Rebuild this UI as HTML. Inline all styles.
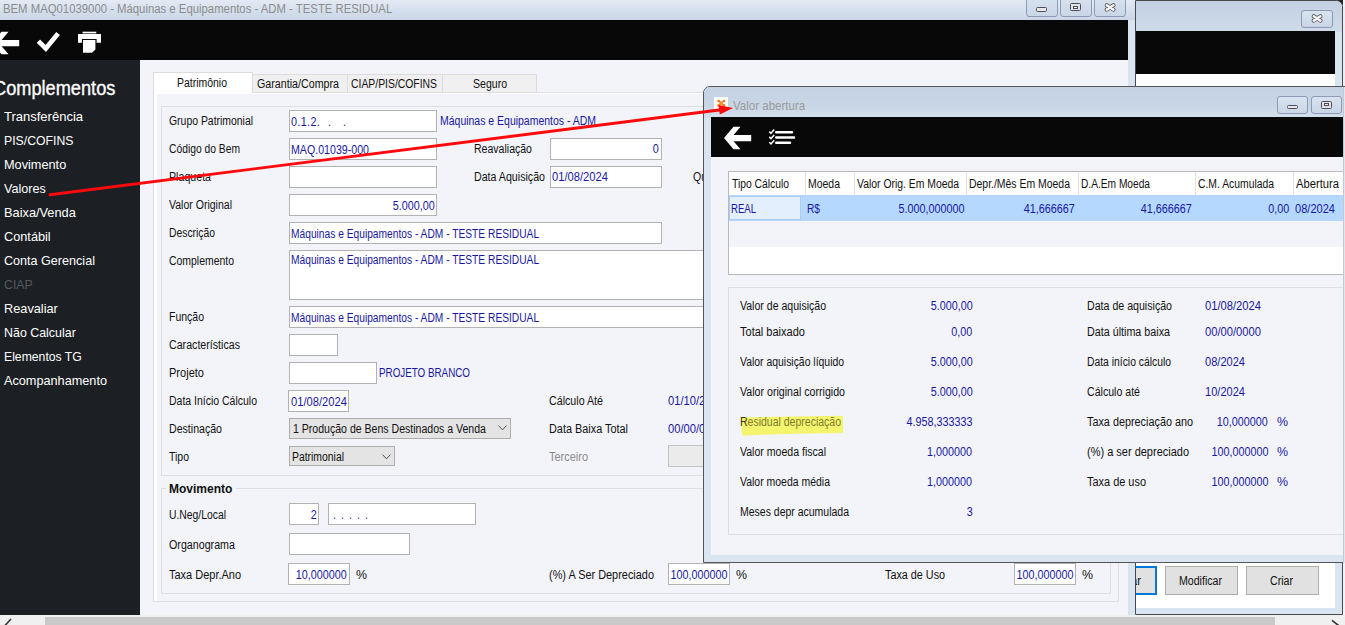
<!DOCTYPE html>
<html lang="pt-BR">
<head>
<meta charset="utf-8">
<title>BEM MAQ01039000 - Máquinas e Equipamentos - ADM - TESTE RESIDUAL</title>
<style>
html,body{margin:0;padding:0;}
body{width:1345px;height:625px;overflow:hidden;position:relative;background:#f3f4f9;font-family:"Liberation Sans",sans-serif;font-size:12px;color:#111;}
.a{position:absolute;}
.t{position:absolute;white-space:nowrap;transform-origin:0 0;transform:scaleX(.865);line-height:14px;font-size:12px;color:#101010;}
.r{position:absolute;white-space:nowrap;transform-origin:100% 0;transform:scaleX(.865);line-height:14px;font-size:12px;text-align:right;color:#101010;}
.b{color:#1717a0;}
.g{color:#8b8b8b;}
.in{position:absolute;background:#fff;border:1px solid #b2b2b2;box-sizing:border-box;}
.side{position:absolute;left:4px;color:#fff;font-size:12.7px;line-height:16px;white-space:nowrap;}
.gb{position:absolute;border:1px solid #dddee3;box-sizing:border-box;}
.wbtn{position:absolute;box-sizing:border-box;border:1px solid #8d99b6;border-radius:3px;background:linear-gradient(#d9e3ef,#c9d6e6);}
.btn{position:absolute;box-sizing:border-box;border:1px solid #adadad;background:#e1e1e1;}
.vl{position:absolute;width:1px;background:#e3e3e3;}
</style>
</head>
<body>

<div id="main" class="a" style="left:0;top:0;width:1135px;height:625px;overflow:hidden;background:#d9e4f1;">
<div class="a" style="left:0;top:0;width:1135px;height:20px;background:linear-gradient(#e3eaf4,#c9d6e6);"></div>
<div class="a" style="left:2.5px;top:1.5px;font-size:12.3px;line-height:15px;color:#8c8c8c;white-space:nowrap;transform-origin:0 0;transform:scaleX(.922);">BEM MAQ01039000 - Máquinas e Equipamentos - ADM - TESTE RESIDUAL</div>
<div class="wbtn" style="left:1026px;top:-4px;width:32px;height:21px;"><div class="a" style="left:9px;top:10px;width:9px;height:2.6px;border:1.1px solid #4e4e5a;background:#e6e6e6;border-radius:1.5px;"></div></div>
<div class="wbtn" style="left:1060px;top:-4px;width:32px;height:21px;"><div class="a" style="left:9px;top:6px;width:8.6px;height:6.3px;border:1.2px solid #4e4e5a;background:#e2e2e2;border-radius:1.5px;"><div class="a" style="left:1.6px;top:1.7px;width:3.4px;height:1px;border:1px solid #4e4e5a;background:#f4f4f4;"></div></div></div>
<div class="wbtn" style="left:1094px;top:-4px;width:32px;height:21px;"><svg class="a" style="left:8.5px;top:6px" width="13" height="11" viewBox="0 0 13 11"><path d="M2.8 2.3 L9.4 6.6 M9.4 2.3 L2.8 6.6" stroke="#5c5c66" stroke-width="4.2" stroke-linecap="round"/><path d="M2.8 2.3 L9.4 6.6 M9.4 2.3 L2.8 6.6" stroke="#f6f6f6" stroke-width="2.5" stroke-linecap="round"/></svg></div>
<div class="a" style="left:0;top:20px;width:1128px;height:40px;background:#080808;"></div>
<svg class="a" style="left:0;top:20px" width="110" height="40" viewBox="0 20 110 40"><g fill="#fff"><path d="M-8 43 L1.5 31.8 H8.5 L1.6 39.9 H19.2 V46.2 H1.6 L8.5 54.2 H1.5 Z"/><path d="M38.4 41.2 L45.8 48.5 L58.1 33.4" fill="none" stroke="#fff" stroke-width="4.7"/><rect x="82.5" y="31.7" width="13.8" height="1.7"/><path d="M78 34 H101 V42.8 H96.6 V38.9 H81.9 V42.8 H78 Z"/><path d="M83 40 H95.4 V49.5 L92 52.8 H83 Z"/></g></svg>
<div class="a" style="left:140px;top:60px;width:988px;height:555px;background:#f3f4f9;"></div>
<div class="a" style="left:0;top:60px;width:140px;height:555px;background:#1c1f24;"></div>
<div class="a" style="left:-7px;top:77px;color:#fff;font-size:20px;line-height:22px;white-space:nowrap;-webkit-text-stroke:.35px #fff;transform-origin:0 0;transform:scaleX(.91);">Complementos</div>
<div class="side" style="top:108.7px;transform-origin:0 0;transform:scaleX(1.025);">Transferência</div>
<div class="side" style="top:132.7px;transform-origin:0 0;transform:scaleX(0.965);">PIS/COFINS</div>
<div class="side" style="top:156.7px;transform-origin:0 0;transform:scaleX(1.003);">Movimento</div>
<div class="side" style="top:180.7px;transform-origin:0 0;transform:scaleX(0.996);">Valores</div>
<div class="side" style="top:204.7px;transform-origin:0 0;transform:scaleX(1.008);">Baixa/Venda</div>
<div class="side" style="top:228.7px;transform-origin:0 0;transform:scaleX(1.003);">Contábil</div>
<div class="side" style="top:252.7px;transform-origin:0 0;transform:scaleX(0.992);">Conta Gerencial</div>
<div class="side" style="top:276.7px;transform-origin:0 0;transform:scaleX(0.97);color:#555960;">CIAP</div>
<div class="side" style="top:300.7px;transform-origin:0 0;transform:scaleX(1.005);">Reavaliar</div>
<div class="side" style="top:324.7px;transform-origin:0 0;transform:scaleX(0.979);">Não Calcular</div>
<div class="side" style="top:348.7px;transform-origin:0 0;transform:scaleX(0.962);">Elementos TG</div>
<div class="side" style="top:372.7px;transform-origin:0 0;transform:scaleX(1.0);">Acompanhamento</div>
<div class="a" style="left:153px;top:92px;width:966px;height:510px;border:1px solid #dddee3;box-sizing:border-box;background:#f3f4f9;"></div>
<div class="a" style="left:252px;top:74px;width:96px;height:19px;border:1px solid #dcdcdc;box-sizing:border-box;background:#f0f0f0;"></div>
<div class="a" style="left:347px;top:74px;width:96px;height:19px;border:1px solid #dcdcdc;box-sizing:border-box;background:#f0f0f0;"></div>
<div class="a" style="left:442px;top:74px;width:95px;height:19px;border:1px solid #dcdcdc;box-sizing:border-box;background:#f0f0f0;"></div>
<div class="t " style="left:257px;top:77.3px;transform:scaleX(0.891);">Garantia/Compra</div>
<div class="t " style="left:351px;top:77.3px;transform:scaleX(0.866);">CIAP/PIS/COFINS</div>
<div class="t " style="left:473px;top:77.3px;transform:scaleX(0.879);">Seguro</div>
<div class="a" style="left:153px;top:72px;width:100px;height:22px;border:1px solid #dcdcdc;border-bottom:none;box-sizing:border-box;background:#fff;"></div>
<div class="t " style="left:177px;top:75.5px;transform:scaleX(0.872);">Patrimônio</div>
<div class="a" style="left:154px;top:93px;width:964px;height:1.4px;background:#fff;"></div>
<div class="a" style="left:154px;top:93px;width:3.3px;height:508px;background:#fff;"></div>
<div class="gb" style="left:161px;top:106px;width:950px;height:370px;"></div>
<div class="t " style="left:169.4px;top:113.5px;transform:scaleX(0.869);">Grupo Patrimonial</div>
<div class="t " style="left:169.4px;top:141.5px;transform:scaleX(0.858);">Código do Bem</div>
<div class="t " style="left:169.4px;top:169.5px;transform:scaleX(0.887);">Plaqueta</div>
<div class="t " style="left:169.4px;top:197.5px;transform:scaleX(0.877);">Valor Original</div>
<div class="t " style="left:169.4px;top:225.5px;transform:scaleX(0.862);">Descrição</div>
<div class="t " style="left:169.4px;top:253.5px;transform:scaleX(0.87);">Complemento</div>
<div class="t " style="left:169.4px;top:309.5px;transform:scaleX(0.874);">Função</div>
<div class="t " style="left:169.4px;top:337.5px;transform:scaleX(0.887);">Características</div>
<div class="t " style="left:169.4px;top:365.5px;transform:scaleX(0.921);">Projeto</div>
<div class="t " style="left:169.4px;top:393.5px;transform:scaleX(0.874);">Data Início Cálculo</div>
<div class="t " style="left:169.4px;top:421.5px;transform:scaleX(0.883);">Destinação</div>
<div class="t " style="left:169.4px;top:449.5px;transform:scaleX(0.873);">Tipo</div>
<div class="in " style="left:289px;top:110px;width:148px;height:22px;"></div>
<div class="t b" style="left:291.3px;top:114.5px;transform:scaleX(0.899);letter-spacing:.4px;">0.1.2.</div>
<div class="t b" style="left:327.6px;top:114.5px;transform:scaleX(0.9);">.</div>
<div class="t b" style="left:343.4px;top:114.5px;transform:scaleX(0.9);">.</div>
<div class="t b" style="left:440.2px;top:113.5px;transform:scaleX(0.873);">Máquinas e Equipamentos - ADM</div>
<div class="in " style="left:289px;top:138px;width:148px;height:22px;"></div>
<div class="t b" style="left:291px;top:143px;transform:scaleX(0.886);">MAQ.01039-000</div>
<div class="t " style="left:474px;top:141.5px;transform:scaleX(0.878);">Reavaliação</div>
<div class="in " style="left:550px;top:138px;width:112px;height:22px;"></div>
<div class="r b" style="right:476px;top:142px;transform:scaleX(0.899);">0</div>
<div class="in " style="left:289px;top:166px;width:148px;height:22px;"></div>
<div class="t " style="left:474px;top:169.5px;transform:scaleX(0.887);">Data Aquisição</div>
<div class="in " style="left:550px;top:166px;width:112px;height:22px;"></div>
<div class="t b" style="left:552px;top:170px;transform:scaleX(0.932);">01/08/2024</div>
<div class="t " style="left:693px;top:169.5px;transform:scaleX(0.875);">Qu</div>
<div class="in " style="left:289px;top:194px;width:148px;height:22px;"></div>
<div class="r b" style="right:700px;top:199px;transform:scaleX(0.899);">5.000,00</div>
<div class="in " style="left:289px;top:222px;width:373px;height:22px;"></div>
<div class="t b" style="left:291px;top:227px;transform:scaleX(0.852);">Máquinas e Equipamentos - ADM - TESTE RESIDUAL</div>
<div class="in " style="left:289px;top:250px;width:500px;height:50px;"></div>
<div class="t b" style="left:291px;top:253px;transform:scaleX(0.852);">Máquinas e Equipamentos - ADM - TESTE RESIDUAL</div>
<div class="in " style="left:289px;top:306px;width:500px;height:22px;"></div>
<div class="t b" style="left:291px;top:311px;transform:scaleX(0.852);">Máquinas e Equipamentos - ADM - TESTE RESIDUAL</div>
<div class="in " style="left:289px;top:334px;width:49px;height:22px;"></div>
<div class="in " style="left:289px;top:362px;width:88px;height:22px;"></div>
<div class="t b" style="left:379px;top:366px;transform:scaleX(0.819);">PROJETO BRANCO</div>
<div class="in " style="left:288px;top:390px;width:61px;height:22px;"></div>
<div class="t b" style="left:291px;top:394.5px;transform:scaleX(0.932);">01/08/2024</div>
<div class="t " style="left:549px;top:393.5px;transform:scaleX(0.89);">Cálculo Até</div>
<div class="t b" style="left:668px;top:393.5px;transform:scaleX(0.932);">01/10/2024</div>
<div class="a" style="left:289px;top:418px;width:222px;height:20.5px;border:1px solid #adadad;box-sizing:border-box;background:#e4e4e4;"></div>
<div class="t " style="left:293px;top:421.5px;transform:scaleX(0.879);">1 Produção de Bens Destinados a Venda</div>
<svg class="a" style="left:497.5px;top:425px" width="9" height="6" viewBox="0 0 9 6"><path d="M0.5 0.6 L4.5 4.8 L8.5 0.6" fill="none" stroke="#505050" stroke-width="1"/></svg>
<div class="t " style="left:549px;top:421.5px;transform:scaleX(0.906);">Data Baixa Total</div>
<div class="t b" style="left:668px;top:421.5px;transform:scaleX(0.932);">00/00/0000</div>
<div class="a" style="left:289px;top:445.8px;width:106px;height:20.5px;border:1px solid #adadad;box-sizing:border-box;background:#e4e4e4;"></div>
<div class="t " style="left:292px;top:449.5px;transform:scaleX(0.866);">Patrimonial</div>
<svg class="a" style="left:381.5px;top:454px" width="9" height="6" viewBox="0 0 9 6"><path d="M0.5 0.6 L4.5 4.8 L8.5 0.6" fill="none" stroke="#505050" stroke-width="1"/></svg>
<div class="t g" style="left:549px;top:449.5px;transform:scaleX(0.914);">Terceiro</div>
<div class="a" style="left:668px;top:445.4px;width:100px;height:22px;border:1px solid #c4c4c4;box-sizing:border-box;background:#ebebeb;"></div>
<div class="gb" style="left:161px;top:487.5px;width:950px;height:106.5px;"></div>
<div class="a" style="left:166px;top:482px;width:70px;height:14px;background:#f3f4f9;"></div>
<div class="t " style="left:169px;top:481.5px;transform:scaleX(1.0);"><b>Movimento</b></div>
<div class="t " style="left:168.5px;top:507.5px;transform:scaleX(0.863);">U.Neg/Local</div>
<div class="in " style="left:289px;top:503.4px;width:30px;height:22px;"></div>
<div class="r b" style="right:818px;top:508px;transform:scaleX(0.899);">2</div>
<div class="in " style="left:328px;top:503.4px;width:148px;height:22px;"></div>
<div class="t b" style="left:332.5px;top:508px;transform:scaleX(0.9);letter-spacing:1.1px;">. . . . .</div>
<div class="t " style="left:169.2px;top:537.5px;transform:scaleX(0.891);">Organograma</div>
<div class="in " style="left:289px;top:533.4px;width:121px;height:22px;"></div>
<div class="t " style="left:169.2px;top:567.5px;transform:scaleX(0.915);">Taxa Depr.Ano</div>
<div class="in " style="left:288px;top:563.4px;width:62px;height:22px;"></div>
<div class="r b" style="right:788px;top:568px;transform:scaleX(0.899);">10,000000</div>
<div class="t " style="left:356px;top:567.5px;transform:scaleX(1.031);">%</div>
<div class="t " style="left:549px;top:567.5px;transform:scaleX(0.91);">(%) A Ser Depreciado</div>
<div class="in " style="left:668px;top:563.4px;width:62px;height:22px;"></div>
<div class="r b" style="right:408px;top:568px;transform:scaleX(0.899);">100,000000</div>
<div class="t " style="left:736px;top:567.5px;transform:scaleX(1.031);">%</div>
<div class="t " style="left:885px;top:567.5px;transform:scaleX(0.9);">Taxa de Uso</div>
<div class="in " style="left:1014px;top:563.4px;width:62px;height:22px;"></div>
<div class="r b" style="right:62px;top:568px;transform:scaleX(0.899);">100,000000</div>
<div class="t " style="left:1082px;top:567.5px;transform:scaleX(1.031);">%</div>
<div class="a" style="left:0;top:615px;width:1135px;height:10px;background:#f0f0f0;"></div>
</div>
<div class="a" style="left:1337px;top:0;width:6.4px;height:5px;background:#262626;"></div>
<div id="win2" class="a" style="left:1135px;top:0;width:208px;height:615px;border:1px solid #4a4a4a;border-radius:0 7px 0 0;box-sizing:border-box;background:#d9e4f1;overflow:hidden;">
<div class="a" style="left:0;top:0;width:208px;height:31px;background:linear-gradient(#c3d1e2,#cfdbe9);"></div>
<div class="wbtn" style="left:165px;top:9px;width:32px;height:18px;"><svg class="a" style="left:8.5px;top:3px" width="13" height="11" viewBox="0 0 13 11"><path d="M2.8 2.3 L9.4 6.6 M9.4 2.3 L2.8 6.6" stroke="#5c5c66" stroke-width="4.2" stroke-linecap="round"/><path d="M2.8 2.3 L9.4 6.6 M9.4 2.3 L2.8 6.6" stroke="#f6f6f6" stroke-width="2.5" stroke-linecap="round"/></svg></div>
<div class="a" style="left:0;top:30px;width:199px;height:43px;background:#080808;"></div>
<div class="a" style="left:0;top:73px;width:199px;height:534px;background:#fff;"></div>
<div class="btn" style="left:-40px;top:565px;width:61px;height:29px;border:2px solid #0078d7;"></div>
<div class="t " style="left:-5px;top:572.5px;transform:scaleX(0.937);">ar</div>
<div class="btn" style="left:29px;top:565px;width:73px;height:29px;"></div>
<div class="btn" style="left:110px;top:565px;width:73px;height:29px;"></div>
</div>
<div class="t " style="left:1179px;top:573.5px;transform:scaleX(0.883);">Modificar</div>
<div class="t " style="left:1270px;top:573.5px;transform:scaleX(0.885);">Criar</div>
<div class="a" style="left:0;top:615px;width:1345px;height:10px;background:#f0f0f0;"></div>
<div class="a" style="left:45px;top:617px;width:1230px;height:8px;background:#c9c9c9;"></div>
<svg class="a" style="left:0;top:615px" width="1345" height="10" viewBox="0 615 1345 10"><path d="M11 619 L5 625.5 M1332 620.3 L1338.5 625.5" fill="none" stroke="#3a3a3a" stroke-width="1.7"/></svg>
<div id="popup" class="a" style="left:703px;top:86px;width:650px;height:477px;border:1px solid #555;border-radius:7px 0 0 0;box-sizing:border-box;background:#dbe5f2;overflow:hidden;">
<div class="a" style="left:0;top:0;width:650px;height:31px;background:linear-gradient(#c4d2e3 0%,#c8d5e5 60%,#d5e0ed 100%);"></div>
<div class="a" style="left:7px;top:30px;width:640px;height:40px;background:#080808;"></div>
<div class="a" style="left:7px;top:70px;width:640px;height:398px;background:#f3f4f9;"></div>
</div>
<svg class="a" style="left:713.6px;top:97px" width="14.4" height="12.4" viewBox="0 0 14.4 12.4"><rect width="14.4" height="12.4" fill="#fdfdfd"/><g fill="#f27a22"><circle cx="4.6" cy="4" r="1.3"/><circle cx="10" cy="4" r="1.3"/><circle cx="4.6" cy="8.4" r="1.3"/><circle cx="10" cy="8.4" r="1.3"/><path d="M4.6 3.6 L10 8.8 M10 3.6 L4.6 8.8" stroke="#f27a22" stroke-width="1.5"/><circle cx="7.3" cy="6.2" r="1.7" fill="#f5912f"/></g></svg>
<div class="a" style="left:733px;top:99px;font-size:12.6px;line-height:15px;color:#9a9a9a;white-space:nowrap;transform-origin:0 0;transform:scaleX(.915);">Valor abertura</div>
<div class="wbtn" style="left:1276.5px;top:96px;width:31px;height:18px;"><div class="a" style="left:9.5px;top:7.6px;width:9px;height:2.6px;border:1.1px solid #4e4e5a;background:#e6e6e6;border-radius:1.5px;"></div></div>
<div class="wbtn" style="left:1310.5px;top:96px;width:31px;height:18px;"><div class="a" style="left:9.5px;top:3.6px;width:8.6px;height:6.3px;border:1.2px solid #4e4e5a;background:#e2e2e2;border-radius:1.5px;"><div class="a" style="left:1.6px;top:1.7px;width:3.4px;height:1px;border:1px solid #4e4e5a;background:#f4f4f4;"></div></div></div>
<svg class="a" style="left:712px;top:117px" width="120" height="40" viewBox="712 117 120 40"><g fill="#fff"><path d="M724 138 L733.5 126.8 H740.5 L733.6 134.9 H751.2 V141.2 H733.6 L740.5 149.2 H733.5 Z"/><g stroke="#fff" fill="none"><path d="M776.2 132.3 H792 M776.2 137.5 H794 M776.2 142.7 H790" stroke-width="2.5" stroke-linecap="round"/><path d="M769.3 131.6 L771 133.3 L774.2 129.6 M769.3 136.9 L771 138.6 L774.2 134.9 M769.3 142.2 L771 143.9 L774.2 140.2" stroke-width="1.5"/></g></g></svg>
<div class="a" style="left:728px;top:171px;width:630px;height:104px;border:1px solid #b9b9b9;box-sizing:border-box;background:#fff;"></div>
<div class="a" style="left:729px;top:195px;width:616px;height:25.5px;background:#b4d8ff;"></div>
<div class="a" style="left:729px;top:196px;width:72px;height:24px;background:#e3effc;border:1px solid #a9cdf3;box-sizing:border-box;"></div>
<div class="a" style="left:729px;top:220.5px;width:616px;height:26px;background:#f3f4f9;"></div>
<div class="vl" style="left:805px;top:172px;height:23px;"></div>
<div class="vl" style="left:854px;top:172px;height:23px;"></div>
<div class="vl" style="left:966px;top:172px;height:23px;"></div>
<div class="vl" style="left:1078px;top:172px;height:23px;"></div>
<div class="vl" style="left:1195px;top:172px;height:23px;"></div>
<div class="vl" style="left:1293px;top:172px;height:23px;"></div>
<div class="t " style="left:732px;top:177px;transform:scaleX(0.86);">Tipo Cálculo</div>
<div class="t " style="left:807.5px;top:177px;transform:scaleX(0.872);">Moeda</div>
<div class="t " style="left:856.5px;top:177px;transform:scaleX(0.866);">Valor Orig. Em Moeda</div>
<div class="t " style="left:968.5px;top:177px;transform:scaleX(0.87);">Depr./Mês Em Moeda</div>
<div class="t " style="left:1080.5px;top:177px;transform:scaleX(0.848);">D.A.Em Moeda</div>
<div class="t " style="left:1197.5px;top:177px;transform:scaleX(0.863);">C.M. Acumulada</div>
<div class="t " style="left:1296px;top:177px;transform:scaleX(0.934);">Abertura</div>
<div class="t b" style="left:731px;top:201.5px;transform:scaleX(0.797);">REAL</div>
<div class="t b" style="left:806.5px;top:201.5px;transform:scaleX(0.848);">R$</div>
<div class="r b" style="right:381px;top:201.5px;transform:scaleX(0.899);">5.000,000000</div>
<div class="r b" style="right:270px;top:201.5px;transform:scaleX(0.899);">41,666667</div>
<div class="r b" style="right:153px;top:201.5px;transform:scaleX(0.899);">41,666667</div>
<div class="r b" style="right:56px;top:201.5px;transform:scaleX(0.899);">0,00</div>
<div class="t b" style="left:1295px;top:201.5px;transform:scaleX(0.922);">08/2024</div>
<div class="a" style="left:728px;top:287px;width:630px;height:248px;border:1px solid #dddee3;box-sizing:border-box;"></div>
<svg class="a" style="left:738px;top:412px" width="110" height="26" viewBox="738 412 110 26"><path d="M741.7 418.2 L842 416.6 L842.4 432.3 L796 433 L742.8 434.6 Z" fill="#f4f46e" stroke="#f4f46e" stroke-width="1.6" stroke-linejoin="round"/></svg>
<div class="t " style="left:739.5px;top:298.5px;transform:scaleX(0.879);">Valor de aquisição</div>
<div class="r b" style="right:372.5px;top:298.5px;transform:scaleX(0.899);">5.000,00</div>
<div class="t " style="left:739.5px;top:324.5px;transform:scaleX(0.919);">Total baixado</div>
<div class="r b" style="right:372.5px;top:324.5px;transform:scaleX(0.899);">0,00</div>
<div class="t " style="left:739.5px;top:354.5px;transform:scaleX(0.868);">Valor aquisição líquido</div>
<div class="r b" style="right:372.5px;top:354.5px;transform:scaleX(0.899);">5.000,00</div>
<div class="t " style="left:739.5px;top:384.5px;transform:scaleX(0.886);">Valor original corrigido</div>
<div class="r b" style="right:372.5px;top:384.5px;transform:scaleX(0.899);">5.000,00</div>
<div class="t " style="left:739.5px;top:414.5px;transform:scaleX(0.875);color:#7d7d30;"><span style="color:#3a3a22">R</span>esidual depreciação</div>
<div class="r b" style="right:372.5px;top:414.5px;transform:scaleX(0.899);">4.958,333333</div>
<div class="t " style="left:739.5px;top:444.5px;transform:scaleX(0.879);">Valor moeda fiscal</div>
<div class="r b" style="right:372.5px;top:444.5px;transform:scaleX(0.899);">1,000000</div>
<div class="t " style="left:739.5px;top:474.5px;transform:scaleX(0.872);">Valor moeda média</div>
<div class="r b" style="right:372.5px;top:474.5px;transform:scaleX(0.899);">1,000000</div>
<div class="t " style="left:739.5px;top:504.5px;transform:scaleX(0.874);">Meses depr acumulada</div>
<div class="r b" style="right:372.5px;top:504.5px;transform:scaleX(0.899);">3</div>
<div class="t " style="left:1087.2px;top:298.5px;transform:scaleX(0.885);">Data de aquisição</div>
<div class="t b" style="left:1205px;top:298.5px;transform:scaleX(0.932);">01/08/2024</div>
<div class="t " style="left:1087.2px;top:324.5px;transform:scaleX(0.895);">Data última baixa</div>
<div class="t b" style="left:1205px;top:324.5px;transform:scaleX(0.932);">00/00/0000</div>
<div class="t " style="left:1087.2px;top:354.5px;transform:scaleX(0.863);">Data início cálculo</div>
<div class="t b" style="left:1205px;top:354.5px;transform:scaleX(0.922);">08/2024</div>
<div class="t " style="left:1087.2px;top:384.5px;transform:scaleX(0.883);">Cálculo até</div>
<div class="t b" style="left:1205px;top:384.5px;transform:scaleX(0.922);">10/2024</div>
<div class="t " style="left:1087.2px;top:414.5px;transform:scaleX(0.903);">Taxa depreciação ano</div>
<div class="t " style="left:1087.2px;top:444.5px;transform:scaleX(0.916);">(%) a ser depreciado</div>
<div class="t " style="left:1087.2px;top:474.5px;transform:scaleX(0.912);">Taxa de uso</div>
<div class="r b" style="right:77px;top:414.5px;transform:scaleX(0.899);">10,000000</div>
<div class="t b" style="left:1276.5px;top:414.5px;transform:scaleX(1.031);">%</div>
<div class="r b" style="right:77px;top:444.5px;transform:scaleX(0.899);">100,000000</div>
<div class="t b" style="left:1276.5px;top:444.5px;transform:scaleX(1.031);">%</div>
<div class="r b" style="right:77px;top:474.5px;transform:scaleX(0.899);">100,000000</div>
<div class="t b" style="left:1276.5px;top:474.5px;transform:scaleX(1.031);">%</div>
<div class="a" style="left:1342.8px;top:87px;width:2.2px;height:476px;background:#e3e7ec;border-left:1px solid #c3c9d2;box-sizing:border-box;"></div>
<div class="a" style="left:1343.4px;top:6px;width:2px;height:80px;background:#eceff3;"></div>
<svg class="a" style="left:0;top:0;pointer-events:none" width="1345" height="625" viewBox="0 0 1345 625"><path d="M50 194.7 L721 109.7" stroke="#fd0a0d" stroke-width="2.9" stroke-linecap="round" fill="none"/><path d="M733 108 L718.5 105 L719.8 114.6 Z" fill="#fd0a0d"/></svg>
</body>
</html>
